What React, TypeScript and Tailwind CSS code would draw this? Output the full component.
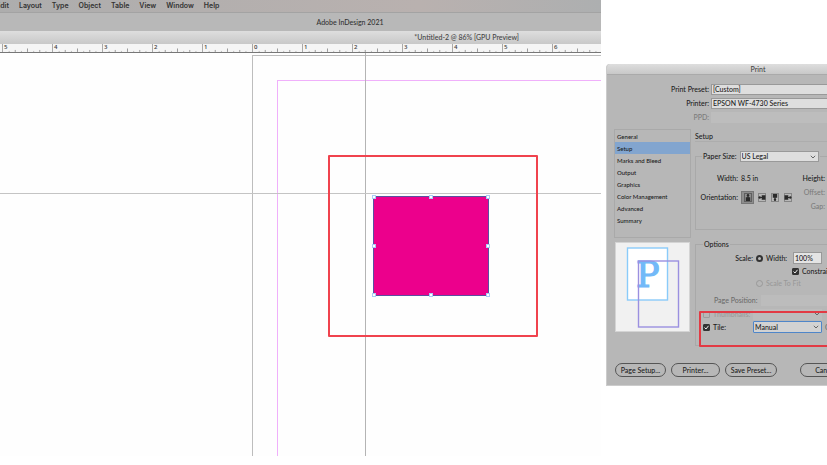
import React from 'react';
import { clsx } from 'clsx';

const MENUS = ['Edit', 'Layout', 'Type', 'Object', 'Table', 'View', 'Window', 'Help'];
const INCHES = [5, 4, 3, 2, 1, 0, 1, 2, 3, 4, 5, 6];
const SECTIONS = ['General', 'Setup', 'Marks and Bleed', 'Output', 'Graphics', 'Color Management', 'Advanced', 'Summary'];

const HANDLES = [
  '-top-0.5 -left-0.5',
  '-top-0.5 left-1/2 -translate-x-1/2',
  '-top-0.5 -right-0.5',
  'top-1/2 -left-0.5 -translate-y-1/2',
  'top-1/2 -right-0.5 -translate-y-1/2',
  '-bottom-0.5 -left-0.5',
  '-bottom-0.5 left-1/2 -translate-x-1/2',
  '-bottom-0.5 -right-0.5',
];

const Ruler = () => (
  <div className="flex h-[9px] overflow-hidden border-b border-[#777] bg-[#f5f5f5] pl-0.5">
    {INCHES.map((inch, i) => (
      <div key={i} className="relative flex w-[50px] shrink-0 border-l border-[#aaa] pl-px font-['Open_Sans',sans-serif] text-[6px] leading-[7px] font-semibold text-[#444]">
        {inch}
        <svg className="absolute inset-0 size-full" viewBox="0 0 50 8" stroke="#999" strokeWidth="1">
          <path d="M12.5 6v2M25 4.5v3.5M37.5 6v2" />
          <path d="M6.3 7v1M18.8 7v1M31.3 7v1M43.8 7v1" strokeOpacity=".7" />
        </svg>
      </div>
    ))}
  </div>
);

const Canvas = () => (
  <div className="relative flex-1 overflow-hidden bg-[#fefefe]">
    <div className="absolute top-[2px] -right-1 -bottom-1 left-[252px] border border-[#bdbdbd]" />
    <div className="absolute top-[27px] -right-1 -bottom-1 left-[277px] border border-[#f0b0fb]" />
    <div className="absolute top-0 bottom-0 left-[365px] w-px bg-[#b4b4b4]" />
    <div className="absolute top-[140px] right-0 left-0 h-px bg-[#c4c4c4]" />
    <div className="absolute top-[102px] left-[328px] h-[182px] w-[210px] rounded-[1px] border-2 border-[#f0434e]" />
    <div className="absolute top-[143px] left-[373px] h-[100px] w-[116px] border border-[#5b4fa0] bg-[#ec008c]">
      {HANDLES.map(position => (
        <span key={position} className={clsx('absolute size-[4px] border border-[#a9cdf7] bg-white', position)} />
      ))}
    </div>
  </div>
);

const Chevron = () => (
  <svg className="pointer-events-none absolute top-1/2 right-[2px] h-[4px] w-[6px] -translate-y-1/2" viewBox="0 0 6 4" fill="none" stroke="#666">
    <path d="M.8 .8 3 3 5.2 .8" />
  </svg>
);

type PickerProps = { id: string; value: string; className?: string; disabled?: boolean };

const Picker = ({ id, value, className, disabled }: PickerProps) => (
  <span className={clsx('relative block', className)}>
    <select id={id} disabled={disabled} defaultValue={value} className="block size-full appearance-none px-px leading-[9px]">
      <option>{value}</option>
    </select>
    <Chevron />
  </span>
);

type TickProps = { id: string; checked?: boolean; disabled?: boolean };

const Tick = ({ id, checked, disabled }: TickProps) => (
  <span className="relative block size-[7px] shrink-0">
    <input
      id={id}
      type="checkbox"
      defaultChecked={checked}
      disabled={disabled}
      className="peer block size-full appearance-none rounded-[1px] border border-[#9c9c9c] checked:border-[#333] checked:bg-[#333]"
    />
    <svg className="pointer-events-none absolute inset-0 hidden size-full peer-checked:block" viewBox="0 0 7 7" fill="none" stroke="#eee">
      <path d="M1.5 3.5 3 5 5.5 1.8" />
    </svg>
  </span>
);

const Orientation = () => {
  const turns = [0, 270, 180, 90];
  const names = ['Portrait', 'Landscape', 'Reverse portrait', 'Reverse landscape'];

  return (
    <div className="flex items-center gap-[2px]">
      {turns.map((turn, i) => (
        <button
          key={turn}
          type="button"
          aria-label={names[i]}
          className={clsx('flex h-[13px] items-center justify-center', i === 0 ? 'w-[13px] border border-[#777] bg-[#8d8d8d]' : 'w-[11px]')}
        >
          <svg className="h-[9px] w-[8px]" viewBox="0 0 8 9" fill="none">
            <rect x=".5" y=".5" width="7" height="8" stroke={i === 0 ? '#5f5f5f' : '#858585'} />
            <g transform={`rotate(${turn} 4 4.5)`} fill="#2a2a2a">
              <circle cx="4" cy="2.2" r="1.2" />
              <path d="M3.4 3h1.2v1.2h1.6V8H1.8V4.2h1.6z" />
            </g>
          </svg>
        </button>
      ))}
    </div>
  );
};

const Preview = () => (
  <div className="h-[90px] border border-[#d4d4d4] bg-[#f1f1f1]">
    <svg className="size-full" viewBox="0 0 73 88" fill="none">
      <rect x="11.5" y="5" width="40" height="52" fill="#fff" stroke="#8acbfa" strokeWidth="1.4" />
      <text x="20" y="44" fontSize="35" fill="#72b9f8" stroke="#72b9f8" strokeWidth="1.2" className="font-['DejaVu_Serif',serif]">P</text>
      <rect x="22.5" y="18" width="40" height="66" stroke="#9b90e0" strokeWidth="1.4" />
    </svg>
  </div>
);

const SetupGroup = () => (
  <fieldset className="h-[79px] border border-[#a9a9a9] pl-[6px]">
    <legend className="flex h-[11px] items-center gap-[3px] px-px">
      <label htmlFor="paper">Paper Size:</label>
      <Picker id="paper" value="US Legal" className="h-[11px] w-[79px] border border-[#999] bg-[#dedede]" />
    </legend>
    <div className="flex pt-3">
      <div className="flex w-24 flex-col gap-2">
        <div className="flex h-[9px] items-center gap-[3px]">
          <span className="w-[36px] text-right">Width:</span>
          <span>8.5 in</span>
        </div>
        <div className="flex h-[13px] items-center gap-[3px]">
          <span className="flex w-[36px] justify-end">Orientation:</span>
          <Orientation />
        </div>
      </div>
      <div className="flex w-[27px] flex-col gap-[5px] text-right leading-[9px]">
        <span>Height:</span>
        <span className="text-[#7c7c7c]">Offset:</span>
        <span className="text-[#7c7c7c]">Gap:</span>
      </div>
    </div>
  </fieldset>
);

const OptionsGroup = () => (
  <div className="relative">
    <fieldset className="h-[106px] border border-[#a9a9a9] pl-[7px]">
      <legend className="h-[9px] px-px">Options</legend>
      <div className="flex flex-col pt-[2px]">
        <div className="flex h-[14px] items-center gap-[3px]">
          <span className="w-[50px] text-right">Scale:</span>
          <input id="scale-width" name="scale" type="radio" defaultChecked className="size-[7px] appearance-none rounded-full border-2 border-[#333] bg-[#bbb]" />
          <label htmlFor="scale-width" className="w-[24px]">Width:</label>
          <input aria-label="Scale width" defaultValue="100%" className="h-[12px] w-[29px] border border-[#999] bg-[#e4e4e4] px-px" />
        </div>
        <div className="flex h-[12px] items-center gap-[3px] pl-[89px]">
          <Tick id="constrain" checked />
          <label htmlFor="constrain" className="whitespace-nowrap">Constrain Proportions</label>
        </div>
        <div className="flex h-[12px] items-center gap-[3px] pl-[53px] text-[#999]">
          <input id="scale-fit" name="scale" type="radio" disabled className="size-[7px] appearance-none rounded-full border border-[#999]" />
          <label htmlFor="scale-fit">Scale To Fit</label>
        </div>
        <div className="mt-[5px] flex h-[12px] items-center gap-[3px] pl-[11px] text-[#6c6c6c]">
          <label htmlFor="position" className="w-[44px] whitespace-nowrap">Page Position:</label>
          <input id="position" disabled className="h-[11px] w-[80px] bg-[#bcbcbc]" />
        </div>
        <div className="mt-[2px] flex h-[12px] items-center gap-[3px] text-[#999]">
          <Tick id="thumbnails" disabled />
          <label htmlFor="thumbnails" className="w-[37px]">Thumbnails:</label>
          <span className="relative h-[11px] w-[69px] bg-[#bcbcbc]">
            <Chevron />
          </span>
        </div>
        <div className="mt-px flex h-[12px] items-center gap-[3px]">
          <Tick id="tile" checked />
          <label htmlFor="tile" className="w-[37px]">Tile:</label>
          <Picker id="tile-mode" value="Manual" className="h-[12px] w-[69px] rounded-[1px] border border-[#4f86c9] bg-[#d2d2d2]" />
          <span className="text-[#6c6c6c]">Overlap:</span>
        </div>
      </div>
    </fieldset>
    <div className="pointer-events-none absolute top-[71px] -right-2 left-1 h-[36px] rounded-[1px] border-2 border-[#e23a44]" />
  </div>
);

const PrintDialog = () => (
  <section aria-label="Print" className="overflow-hidden rounded-tl border-b border-l border-[#ccc] bg-[#b7b7b7] text-[7px] leading-[9px] font-medium text-[#1c1c1c]">
    <h2 className="flex h-[11px] items-center border-b border-[#aaa] bg-linear-to-b from-[#dedede] to-[#c8c8c8]">
      <span className="w-[302px] shrink-0 text-center text-[#444]">Print</span>
    </h2>
    <div className="flex flex-col gap-[3px] pt-[9px]">
      <div className="flex items-center gap-[2px]">
        <label htmlFor="preset" className="w-[102px] shrink-0 text-right">Print Preset:</label>
        <Picker id="preset" value="[Custom]" className="h-[11px] w-[180px] shrink-0 border border-[#999] bg-[#dedede]" />
      </div>
      <div className="flex items-center gap-[2px]">
        <label htmlFor="printer" className="w-[102px] shrink-0 text-right">Printer:</label>
        <Picker id="printer" value="EPSON WF-4730 Series" className="h-[11px] w-[180px] shrink-0 border border-[#999] bg-[#dedede]" />
      </div>
      <div className="flex items-center gap-[2px] text-[#7c7c7c]">
        <span className="w-[102px] shrink-0 text-right">PPD:</span>
        <span className="h-[11px] w-[180px] shrink-0 bg-[#bdbdbd]" />
      </div>
    </div>
    <div className="flex gap-[5px] pt-[7px] pl-2">
      <div className="flex w-[75px] shrink-0 flex-col gap-[5px]">
        <nav className="flex h-[107px] flex-col text-[6px] outline outline-[#a9a9a9]">
          {SECTIONS.map(section => (
            <button
              key={section}
              type="button"
              className={clsx('h-[12px] shrink-0 px-[2px] text-left', section === 'Setup' && 'bg-[#82a5cf]')}
            >
              {section}
            </button>
          ))}
        </nav>
        <Preview />
      </div>
      <div className="flex w-[210px] shrink-0 flex-col">
        <h3 className="border-b border-[#adadad] pt-[2px]">Setup</h3>
        <div className="flex flex-col gap-[10px] pt-[9px]">
          <SetupGroup />
          <OptionsGroup />
        </div>
      </div>
    </div>
    <div className="flex gap-[5px] pt-[17px] pb-2 pl-2">
      <button type="button" className="h-[14px] w-[51px] shrink-0 rounded-full border border-[#555]">Page Setup...</button>
      <button type="button" className="h-[14px] w-[49px] shrink-0 rounded-full border border-[#555]">Printer...</button>
      <button type="button" className="h-[14px] w-[52px] shrink-0 rounded-full border border-[#555]">Save Preset...</button>
      <button type="button" className="ml-[18px] h-[14px] w-[51px] shrink-0 rounded-full border border-[#555]">Cancel</button>
    </div>
  </section>
);

export default function App() {
  return (
    <div className="flex h-screen overflow-hidden bg-white font-['Lato',sans-serif]">
      <main className="mb-[9px] flex min-w-0 flex-1 flex-col">
        <nav className="flex h-[13px] items-center gap-[10px] overflow-hidden border-b border-[#a3a3a3] bg-linear-to-r from-[#adadad] via-[#b9b1af] via-70% to-[#adafb0] font-['Inter',sans-serif] text-[7px] font-semibold text-[#333]">
          {MENUS.map(menu => (
            <button key={menu} type="button" className="shrink-0 first:-ml-1">
              {menu}
            </button>
          ))}
        </nav>
        <header className="flex h-[18px] items-center bg-[#b8b8b8] text-[7px] font-medium text-[#333]">
          <h1 className="w-[700px] shrink-0 text-center">Adobe InDesign 2021</h1>
        </header>
        <div className="flex h-[13px] items-center justify-end bg-linear-to-b from-[#dedede] to-[#c8c8c8] pr-[82px] text-[7px] font-medium text-[#444]">
          *Untitled-2 @ 86% [GPU Preview]
        </div>
        <Ruler />
        <Canvas />
      </main>
      <aside className="w-[226px] shrink-0 pt-16 pl-[5px]">
        <PrintDialog />
      </aside>
    </div>
  );
}
